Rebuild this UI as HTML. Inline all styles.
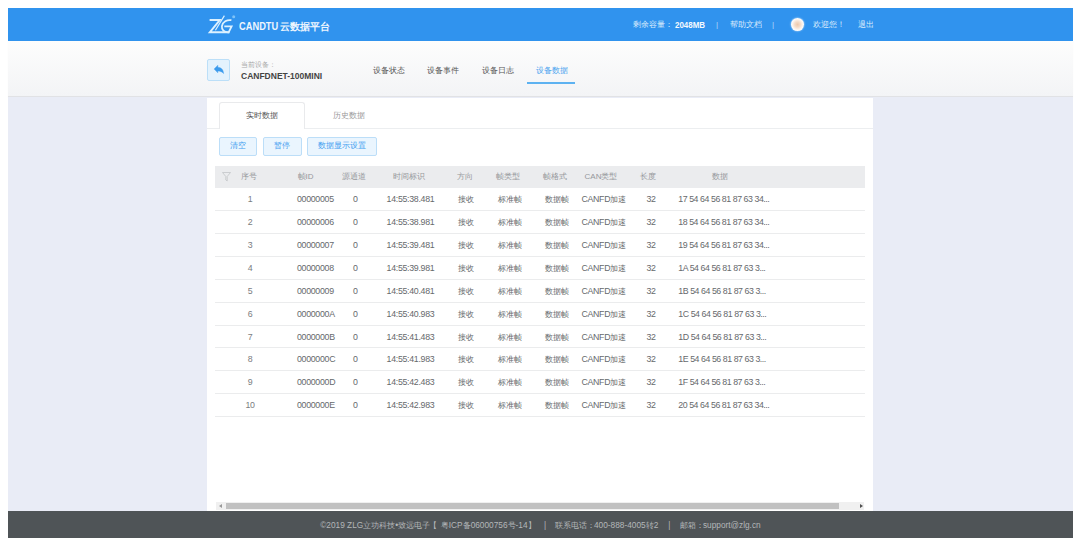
<!DOCTYPE html>
<html><head><meta charset="utf-8">
<style>
*{margin:0;padding:0;box-sizing:border-box}
html,body{width:1080px;height:546px;overflow:hidden;background:#fff;font-family:"Liberation Sans",sans-serif}
.a{position:absolute}
#hdr{position:absolute;left:8px;top:8px;width:1065px;height:32.7px;background:#3093ee}
#sub{position:absolute;left:8px;top:40.2px;width:1065px;height:57.1px;background:linear-gradient(#fdfdfd,#f3f4f6);border-bottom:1px solid #e1e2e5;box-shadow:0 0.5px 1px rgba(0,0,0,0.05)}
#main{position:absolute;left:8px;top:97.3px;width:1065px;height:414px;background:#e9ecf6}
#panel{position:absolute;left:207px;top:98.2px;width:666px;height:413px;background:#fff}
#ftr{position:absolute;left:8px;top:510.5px;width:1065px;height:27.5px;background:#4f5457}
.ht{position:absolute;color:#dbecfc;font-size:8px;line-height:10px;white-space:nowrap}
.t{position:absolute;font-size:8px;line-height:22.87px;white-space:nowrap}
.td{font-size:8.8px;letter-spacing:-0.3px}
.dd{font-weight:normal;letter-spacing:-0.45px}
.td.ix{color:#7a7d80}
i{font-style:normal;font-size:8px;letter-spacing:0}
.th{color:#96989c;line-height:22.8px}
.td{color:#66696c}
.rl{position:absolute;left:215.4px;width:649.3px;height:1px;background:#ebeced}
#thead{position:absolute;left:215.4px;top:165.5px;width:649.3px;height:22.8px;background:#ebecee}
.btn{position:absolute;top:137.4px;height:18.6px;border:1px solid #bcdef8;border-radius:2px;background:#eaf5fe;color:#3f9df0;font-size:8px;line-height:16.6px;text-align:center}
.ft{position:absolute;top:519.5px;color:#b4b7b9;font-size:8.3px;line-height:10px;white-space:nowrap}
.nav{position:absolute;top:65.6px;font-size:7.6px;line-height:10px;color:#555;white-space:nowrap}
</style></head><body>
<div id="sub"></div>
<div id="hdr"></div>
<div id="main"></div>
<div id="panel"></div>
<div id="ftr"></div>

<!-- header content -->
<svg class="a" style="left:205px;top:12px" width="32" height="24" viewBox="0 0 32 24">
<path d="M4.6 8.1 H14.8 L4.9 20.2 H24.4" fill="none" stroke="#dcf1ff" stroke-width="2" stroke-linejoin="miter"/>
<path d="M19.4 3.6 L10.4 18.2" fill="none" stroke="#dcf1ff" stroke-width="1.2"/>
<path d="M26.4 8.2 C22 7.4 17.6 10 16.9 14.2 C16.5 17.8 19 20.6 23.6 20.4 L26.6 14.3 H19.3" fill="none" stroke="#dcf1ff" stroke-width="1.8"/>
<circle cx="28.7" cy="4.7" r="1.5" fill="#7fc2f7"/>
</svg>
<div class="ht" style="left:238.8px;top:20.5px;font-size:10.5px;line-height:11px;font-weight:bold;color:#eef6fe;transform:scaleX(0.885);transform-origin:0 0">CANDTU</div>
<div class="ht" style="left:280.4px;top:21px;font-size:9.7px;line-height:11px;font-weight:bold;color:#eef6fe">云数据平台</div>
<div class="ht" style="left:633px;top:20px">剩余容量：</div>
<div class="ht" style="left:674.5px;top:19.7px;color:#f4f9fe;font-weight:bold;font-size:8.4px;transform:scaleX(0.95);transform-origin:0 0">2048MB</div>
<div class="ht" style="left:716px;top:20px;color:#b8dcf8">|</div>
<div class="ht" style="left:729.6px;top:20px">帮助文档</div>
<div class="ht" style="left:772px;top:20px;color:#b8dcf8">|</div>
<div class="a" style="left:791px;top:18.3px;width:12.8px;height:12.8px;border-radius:50%;background:radial-gradient(circle,#eec9ad 0,#f5dcc9 30%,#fcf4ee 55%,#fff 70%);box-shadow:0 0 1.5px 0.5px rgba(255,255,255,0.5)"></div>
<div class="ht" style="left:813.3px;top:20px">欢迎您！</div>
<div class="ht" style="left:858px;top:20px">退出</div>

<!-- sub header -->
<div class="a" style="left:207.4px;top:58.8px;width:22.8px;height:22.7px;border:1px solid #bcdff8;border-radius:2px;background:#e3f2fd"></div>
<svg class="a" style="left:207.4px;top:59.1px" width="23" height="23" viewBox="0 0 23 23"><path d="M7.1 10.1 L10.8 6.3 V8.3 C14.2 8.4 16.4 10.6 16.6 14.6 C15.2 12.7 13.4 11.9 10.8 11.9 V13.8 Z" fill="#3b9bed" stroke="#3b9bed" stroke-width="0.4" stroke-linejoin="round"/></svg>
<div class="a" style="left:241px;top:60.5px;font-size:7.4px;line-height:8px;color:#aaa;white-space:nowrap">当前设备：</div>
<div class="a" style="left:241px;top:71px;font-size:8.5px;line-height:10px;color:#444;font-weight:bold;white-space:nowrap">CANFDNET-100MINI</div>
<div class="nav" style="left:372.8px">设备状态</div>
<div class="nav" style="left:427.2px">设备事件</div>
<div class="nav" style="left:481.7px">设备日志</div>
<div class="nav" style="left:536.1px;color:#4aa3ef">设备数据</div>
<div class="a" style="left:527.2px;top:82px;width:47.8px;height:1.5px;background:#5db2f1"></div>

<!-- tabs -->
<div class="a" style="left:207px;top:128px;width:666px;height:1px;background:#eceef0"></div>
<div class="a" style="left:218.7px;top:101.5px;width:86.3px;height:27.5px;border:1px solid #e9eaec;border-bottom:none;border-radius:3px 3px 0 0;background:#fff"></div>
<div class="a" style="left:218px;top:110px;width:87px;text-align:center;font-size:8px;line-height:12px;color:#555">实时数据</div>
<div class="a" style="left:305px;top:110px;width:87px;text-align:center;font-size:8px;line-height:12px;color:#999">历史数据</div>

<!-- buttons -->
<div class="btn" style="left:219px;width:38.3px">清空</div>
<div class="btn" style="left:262.9px;width:38.9px">暂停</div>
<div class="btn" style="left:307.2px;width:70.2px">数据显示设置</div>

<!-- table -->
<div id="thead"></div>
<svg class="a" style="left:222px;top:172px" width="9" height="10" viewBox="0 0 9 10"><path d="M0.5 0.5 H8.5 L5.2 4.5 V9 L3.8 8 V4.5 Z" fill="none" stroke="#c3c5c8" stroke-width="0.8"/></svg>
<div class="t th" style="left:209.30px;top:165.50px;width:80px;text-align:center">序号</div>
<div class="t th" style="left:297.60px;top:165.50px">帧ID</div>
<div class="t th" style="left:314.30px;top:165.50px;width:80px;text-align:center">源通道</div>
<div class="t th" style="left:369.40px;top:165.50px;width:80px;text-align:center">时间标识</div>
<div class="t th" style="left:424.80px;top:165.50px;width:80px;text-align:center">方向</div>
<div class="t th" style="left:467.80px;top:165.50px;width:80px;text-align:center">帧类型</div>
<div class="t th" style="left:514.50px;top:165.50px;width:80px;text-align:center">帧格式</div>
<div class="t th" style="left:561.00px;top:165.50px;width:80px;text-align:center">CAN类型</div>
<div class="t th" style="left:607.60px;top:165.50px;width:80px;text-align:center">长度</div>
<div class="t th" style="left:679.60px;top:165.50px;width:80px;text-align:center">数据</div>
<div class="rl" style="top:210.17px"></div>
<div class="t td ix" style="left:210.00px;top:188.30px;width:80px;text-align:center">1</div>
<div class="t td" style="left:297.00px;top:188.30px">00000005</div>
<div class="t td" style="left:315.30px;top:188.30px;width:80px;text-align:center">0</div>
<div class="t td" style="left:370.50px;top:188.30px;width:80px;text-align:center">14:55:38.481</div>
<div class="t td" style="left:426.00px;top:188.30px;width:80px;text-align:center"><i>接收</i></div>
<div class="t td" style="left:469.50px;top:188.30px;width:80px;text-align:center"><i>标准帧</i></div>
<div class="t td" style="left:516.50px;top:188.30px;width:80px;text-align:center"><i>数据帧</i></div>
<div class="t td" style="left:563.80px;top:188.30px;width:80px;text-align:center">CANFD<i>加速</i></div>
<div class="t td" style="left:611.00px;top:188.30px;width:80px;text-align:center">32</div>
<div class="t td" style="left:678.30px;top:188.30px"><b class="dd">17 54 64 56 81 87 63 34...</b></div>
<div class="rl" style="top:233.04px"></div>
<div class="t td ix" style="left:210.00px;top:211.17px;width:80px;text-align:center">2</div>
<div class="t td" style="left:297.00px;top:211.17px">00000006</div>
<div class="t td" style="left:315.30px;top:211.17px;width:80px;text-align:center">0</div>
<div class="t td" style="left:370.50px;top:211.17px;width:80px;text-align:center">14:55:38.981</div>
<div class="t td" style="left:426.00px;top:211.17px;width:80px;text-align:center"><i>接收</i></div>
<div class="t td" style="left:469.50px;top:211.17px;width:80px;text-align:center"><i>标准帧</i></div>
<div class="t td" style="left:516.50px;top:211.17px;width:80px;text-align:center"><i>数据帧</i></div>
<div class="t td" style="left:563.80px;top:211.17px;width:80px;text-align:center">CANFD<i>加速</i></div>
<div class="t td" style="left:611.00px;top:211.17px;width:80px;text-align:center">32</div>
<div class="t td" style="left:678.30px;top:211.17px"><b class="dd">18 54 64 56 81 87 63 34...</b></div>
<div class="rl" style="top:255.91px"></div>
<div class="t td ix" style="left:210.00px;top:234.04px;width:80px;text-align:center">3</div>
<div class="t td" style="left:297.00px;top:234.04px">00000007</div>
<div class="t td" style="left:315.30px;top:234.04px;width:80px;text-align:center">0</div>
<div class="t td" style="left:370.50px;top:234.04px;width:80px;text-align:center">14:55:39.481</div>
<div class="t td" style="left:426.00px;top:234.04px;width:80px;text-align:center"><i>接收</i></div>
<div class="t td" style="left:469.50px;top:234.04px;width:80px;text-align:center"><i>标准帧</i></div>
<div class="t td" style="left:516.50px;top:234.04px;width:80px;text-align:center"><i>数据帧</i></div>
<div class="t td" style="left:563.80px;top:234.04px;width:80px;text-align:center">CANFD<i>加速</i></div>
<div class="t td" style="left:611.00px;top:234.04px;width:80px;text-align:center">32</div>
<div class="t td" style="left:678.30px;top:234.04px"><b class="dd">19 54 64 56 81 87 63 34...</b></div>
<div class="rl" style="top:278.78px"></div>
<div class="t td ix" style="left:210.00px;top:256.91px;width:80px;text-align:center">4</div>
<div class="t td" style="left:297.00px;top:256.91px">00000008</div>
<div class="t td" style="left:315.30px;top:256.91px;width:80px;text-align:center">0</div>
<div class="t td" style="left:370.50px;top:256.91px;width:80px;text-align:center">14:55:39.981</div>
<div class="t td" style="left:426.00px;top:256.91px;width:80px;text-align:center"><i>接收</i></div>
<div class="t td" style="left:469.50px;top:256.91px;width:80px;text-align:center"><i>标准帧</i></div>
<div class="t td" style="left:516.50px;top:256.91px;width:80px;text-align:center"><i>数据帧</i></div>
<div class="t td" style="left:563.80px;top:256.91px;width:80px;text-align:center">CANFD<i>加速</i></div>
<div class="t td" style="left:611.00px;top:256.91px;width:80px;text-align:center">32</div>
<div class="t td" style="left:678.30px;top:256.91px"><b class="dd">1A 54 64 56 81 87 63 3...</b></div>
<div class="rl" style="top:301.65px"></div>
<div class="t td ix" style="left:210.00px;top:279.78px;width:80px;text-align:center">5</div>
<div class="t td" style="left:297.00px;top:279.78px">00000009</div>
<div class="t td" style="left:315.30px;top:279.78px;width:80px;text-align:center">0</div>
<div class="t td" style="left:370.50px;top:279.78px;width:80px;text-align:center">14:55:40.481</div>
<div class="t td" style="left:426.00px;top:279.78px;width:80px;text-align:center"><i>接收</i></div>
<div class="t td" style="left:469.50px;top:279.78px;width:80px;text-align:center"><i>标准帧</i></div>
<div class="t td" style="left:516.50px;top:279.78px;width:80px;text-align:center"><i>数据帧</i></div>
<div class="t td" style="left:563.80px;top:279.78px;width:80px;text-align:center">CANFD<i>加速</i></div>
<div class="t td" style="left:611.00px;top:279.78px;width:80px;text-align:center">32</div>
<div class="t td" style="left:678.30px;top:279.78px"><b class="dd">1B 54 64 56 81 87 63 3...</b></div>
<div class="rl" style="top:324.52px"></div>
<div class="t td ix" style="left:210.00px;top:302.65px;width:80px;text-align:center">6</div>
<div class="t td" style="left:297.00px;top:302.65px">0000000A</div>
<div class="t td" style="left:315.30px;top:302.65px;width:80px;text-align:center">0</div>
<div class="t td" style="left:370.50px;top:302.65px;width:80px;text-align:center">14:55:40.983</div>
<div class="t td" style="left:426.00px;top:302.65px;width:80px;text-align:center"><i>接收</i></div>
<div class="t td" style="left:469.50px;top:302.65px;width:80px;text-align:center"><i>标准帧</i></div>
<div class="t td" style="left:516.50px;top:302.65px;width:80px;text-align:center"><i>数据帧</i></div>
<div class="t td" style="left:563.80px;top:302.65px;width:80px;text-align:center">CANFD<i>加速</i></div>
<div class="t td" style="left:611.00px;top:302.65px;width:80px;text-align:center">32</div>
<div class="t td" style="left:678.30px;top:302.65px"><b class="dd">1C 54 64 56 81 87 63 3...</b></div>
<div class="rl" style="top:347.39px"></div>
<div class="t td ix" style="left:210.00px;top:325.52px;width:80px;text-align:center">7</div>
<div class="t td" style="left:297.00px;top:325.52px">0000000B</div>
<div class="t td" style="left:315.30px;top:325.52px;width:80px;text-align:center">0</div>
<div class="t td" style="left:370.50px;top:325.52px;width:80px;text-align:center">14:55:41.483</div>
<div class="t td" style="left:426.00px;top:325.52px;width:80px;text-align:center"><i>接收</i></div>
<div class="t td" style="left:469.50px;top:325.52px;width:80px;text-align:center"><i>标准帧</i></div>
<div class="t td" style="left:516.50px;top:325.52px;width:80px;text-align:center"><i>数据帧</i></div>
<div class="t td" style="left:563.80px;top:325.52px;width:80px;text-align:center">CANFD<i>加速</i></div>
<div class="t td" style="left:611.00px;top:325.52px;width:80px;text-align:center">32</div>
<div class="t td" style="left:678.30px;top:325.52px"><b class="dd">1D 54 64 56 81 87 63 3...</b></div>
<div class="rl" style="top:370.26px"></div>
<div class="t td ix" style="left:210.00px;top:348.39px;width:80px;text-align:center">8</div>
<div class="t td" style="left:297.00px;top:348.39px">0000000C</div>
<div class="t td" style="left:315.30px;top:348.39px;width:80px;text-align:center">0</div>
<div class="t td" style="left:370.50px;top:348.39px;width:80px;text-align:center">14:55:41.983</div>
<div class="t td" style="left:426.00px;top:348.39px;width:80px;text-align:center"><i>接收</i></div>
<div class="t td" style="left:469.50px;top:348.39px;width:80px;text-align:center"><i>标准帧</i></div>
<div class="t td" style="left:516.50px;top:348.39px;width:80px;text-align:center"><i>数据帧</i></div>
<div class="t td" style="left:563.80px;top:348.39px;width:80px;text-align:center">CANFD<i>加速</i></div>
<div class="t td" style="left:611.00px;top:348.39px;width:80px;text-align:center">32</div>
<div class="t td" style="left:678.30px;top:348.39px"><b class="dd">1E 54 64 56 81 87 63 3...</b></div>
<div class="rl" style="top:393.13px"></div>
<div class="t td ix" style="left:210.00px;top:371.26px;width:80px;text-align:center">9</div>
<div class="t td" style="left:297.00px;top:371.26px">0000000D</div>
<div class="t td" style="left:315.30px;top:371.26px;width:80px;text-align:center">0</div>
<div class="t td" style="left:370.50px;top:371.26px;width:80px;text-align:center">14:55:42.483</div>
<div class="t td" style="left:426.00px;top:371.26px;width:80px;text-align:center"><i>接收</i></div>
<div class="t td" style="left:469.50px;top:371.26px;width:80px;text-align:center"><i>标准帧</i></div>
<div class="t td" style="left:516.50px;top:371.26px;width:80px;text-align:center"><i>数据帧</i></div>
<div class="t td" style="left:563.80px;top:371.26px;width:80px;text-align:center">CANFD<i>加速</i></div>
<div class="t td" style="left:611.00px;top:371.26px;width:80px;text-align:center">32</div>
<div class="t td" style="left:678.30px;top:371.26px"><b class="dd">1F 54 64 56 81 87 63 3...</b></div>
<div class="rl" style="top:416.00px"></div>
<div class="t td ix" style="left:210.00px;top:394.13px;width:80px;text-align:center">10</div>
<div class="t td" style="left:297.00px;top:394.13px">0000000E</div>
<div class="t td" style="left:315.30px;top:394.13px;width:80px;text-align:center">0</div>
<div class="t td" style="left:370.50px;top:394.13px;width:80px;text-align:center">14:55:42.983</div>
<div class="t td" style="left:426.00px;top:394.13px;width:80px;text-align:center"><i>接收</i></div>
<div class="t td" style="left:469.50px;top:394.13px;width:80px;text-align:center"><i>标准帧</i></div>
<div class="t td" style="left:516.50px;top:394.13px;width:80px;text-align:center"><i>数据帧</i></div>
<div class="t td" style="left:563.80px;top:394.13px;width:80px;text-align:center">CANFD<i>加速</i></div>
<div class="t td" style="left:611.00px;top:394.13px;width:80px;text-align:center">32</div>
<div class="t td" style="left:678.30px;top:394.13px"><b class="dd">20 54 64 56 81 87 63 34...</b></div>

<!-- scrollbar -->
<div class="a" style="left:216.3px;top:502.4px;width:647.8px;height:7.2px;background:#f0f0f0"></div>
<div class="a" style="left:226px;top:502.6px;width:613.3px;height:6.8px;background:#c1c1c1"></div>
<div class="a" style="left:219px;top:503.5px;width:0;height:0;border-top:2.5px solid transparent;border-bottom:2.5px solid transparent;border-right:3px solid #999"></div>
<div class="a" style="left:859.5px;top:503.5px;width:0;height:0;border-top:2.5px solid transparent;border-bottom:2.5px solid transparent;border-left:3px solid #505050"></div>

<!-- footer -->
<div class="ft" style="left:320.2px">©2019 ZLG立功科技•致远电子</div>
<div class="ft" style="left:429.2px">【</div>
<div class="ft" style="left:440.8px">粤ICP备06000756号-14</div>
<div class="ft" style="left:527.5px">】</div>
<div class="ft" style="left:544px">|</div>
<div class="ft" style="left:555.2px">联系电话：</div>
<div class="ft" style="left:594px">400-888-4005转2</div>
<div class="ft" style="left:668.3px">|</div>
<div class="ft" style="left:679.7px">邮箱：</div>
<div class="ft" style="left:702.9px">support@zlg.cn</div>
</body></html>
